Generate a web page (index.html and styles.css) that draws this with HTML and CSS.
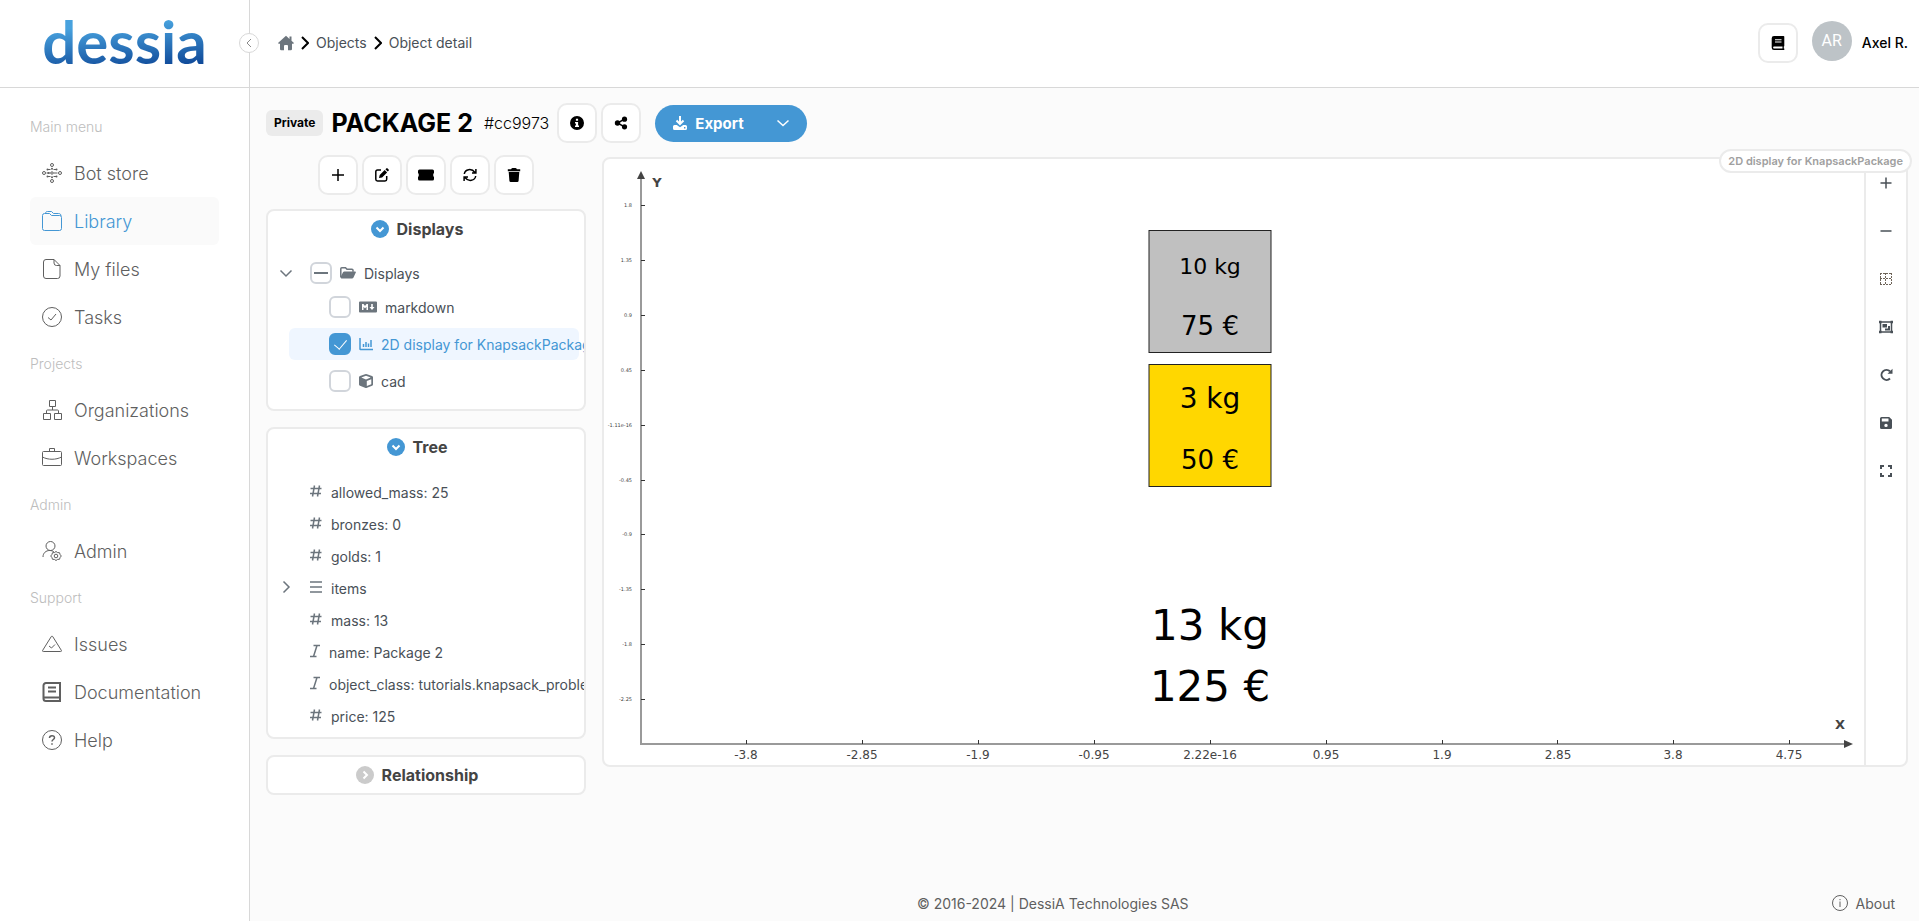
FILE: index.html
```html
<!DOCTYPE html>
<html lang="en">
<head>
<meta charset="utf-8">
<meta name="viewport" content="width=device-width, initial-scale=1">
<title>Object detail</title>
<link rel="stylesheet" href="styles.css">
</head>
<body>
<div class="app">
  <aside class="sidebar">
    <div class="brand"><a class="logo" href="#">dessia</a></div>
    <button class="collapse" type="button" aria-label="Collapse menu">
      <svg class="i10" viewBox="0 0 10 10"><path class="ln" d="M7 1 3 5l4 4"/></svg>
    </button>
    <nav class="menu">
      <h2 class="menu-label">Main menu</h2>
      <a class="menu-item" href="#"><svg class="i20 thin bots" viewBox="0 0 20 20"><circle cx="10" cy="2" r="1.500"/><circle cx="10" cy="18" r="1.500"/><circle cx="2" cy="10" r="1.500"/><circle cx="18" cy="10" r="1.500"/><circle cx="10" cy="10" r="1.200"/><path d="M5.500 6.500h3M11.500 6.500h3M5.500 13.500h3M11.500 13.500h3M4.500 10h4M11.500 10h4"/><g class="dots"><circle cx="5.500" cy="6.500" r="1"/><circle cx="14.500" cy="6.500" r="1"/><circle cx="5.500" cy="13.500" r="1"/><circle cx="14.500" cy="13.500" r="1"/><circle cx="10" cy="5.800" r="1"/><circle cx="10" cy="14.200" r="1"/><circle cx="6.500" cy="10" r="1"/></g></svg>Bot store</a>
      <a class="menu-item active" href="#"><svg class="i20 thin" viewBox="0 0 20 20"><path d="M.5 4.500a2 2 0 0 1 2-2h5l2 2h8a2 2 0 0 1 2 2v11a2 2 0 0 1-2 2h-15a2 2 0 0 1-2-2zM3.500 2.500c0-1.300.7-2 2-2h4l2 2h5c1.600 0 2.500.9 2.500 2.500"/></svg>Library</a>
      <a class="menu-item" href="#"><svg class="i20 thin" viewBox="0 0 20 20"><path d="M12 .5H4a2.500 2.500 0 0 0-2.500 2.500v14A2.500 2.500 0 0 0 4 19.500h11.500A2.500 2.500 0 0 0 18 17V6.500zM12 .5V4a2.500 2.500 0 0 0 2.500 2.500H18"/></svg>My files</a>
      <a class="menu-item" href="#"><svg class="i20 thin" viewBox="0 0 20 20"><circle cx="10" cy="10" r="9.500"/><path d="m6 10.500 3 2.500 5-6"/></svg>Tasks</a>
      <h2 class="menu-label">Projects</h2>
      <a class="menu-item" href="#"><svg class="i20 thin" viewBox="0 0 20 20"><path d="M7.500.5h6v6h-6zM1.500 13.500h7v6h-7zM12.500 13.500h7v6h-7zM10.500 6.500V10M4.500 13.500V11q0-1 1-1h10q1 0 1 1v2.500"/></svg>Organizations</a>
      <a class="menu-item" href="#"><svg class="i20 thin" viewBox="0 0 20 20"><rect x=".5" y="3.500" width="19" height="14" rx="1"/><path d="M7.500 3.500v-3h5v3M.5 9c5.500 3 13.500 3 19 0"/></svg>Workspaces</a>
      <h2 class="menu-label">Admin</h2>
      <a class="menu-item" href="#"><svg class="i20 thin" viewBox="0 0 20 20"><circle cx="8.500" cy="5" r="4.500"/><path d="M1 16c0-4 3-6.500 6.500-6.500 2 0 3.500.5 4.500 1.500"/><circle cx="14" cy="15" r="1.800"/><path d="m14 10.500 1.600 1.100 1.900.1.600 1.800 1.200 1.500-1.200 1.500-.6 1.800-1.900.1-1.600 1.100-1.600-1.100-1.900-.1-.6-1.800L8.700 15l1.200-1.500.6-1.800 1.900-.1z"/></svg>Admin</a>
      <h2 class="menu-label">Support</h2>
      <a class="menu-item" href="#"><svg class="i20 thin" viewBox="0 0 20 20"><path d="M9.300 2.500.7 16.300q-.6 1.200.6 1.200h17.400q1.200 0 .6-1.200L10.700 2.500q-.7-1-1.400 0zM7 12l2.500 2 3.500-3.500"/></svg>Issues</a>
      <a class="menu-item" href="#"><svg class="i20 thick" viewBox="0 0 20 20"><path d="M18 1H4a2.500 2.500 0 0 0-2.500 2.500v13A2.500 2.500 0 0 0 4 19h14zM2 15.500h16M6 5.500h8M6 9.500h8"/></svg>Documentation</a>
      <a class="menu-item" href="#"><svg class="i20 thin" viewBox="0 0 20 20"><circle cx="10" cy="10" r="9.500"/><path class="w15" d="M7.500 8c0-3 5-3 5-.3 0 1.800-2.500 1.800-2.500 3.800M10 13.300v1.500"/></svg>Help</a>
    </nav>
  </aside>

  <div class="page">
    <header class="topbar">
      <nav class="crumbs" aria-label="Breadcrumb">
        <a href="#" aria-label="Home"><svg class="home" viewBox="0 0 16 16"><path d="M8 .8 0 8l1 1 1-.6V14q0 1.200 1.200 1.200H6V11q0-1 1-1h2q1 0 1 1v4.200h2.800Q14 15.200 14 14V8.400l1 .6 1-1-2.500-2.300V1.600h-2v2.300z"/></svg></a>
        <svg class="sep" viewBox="0 0 8 14"><path class="ln" d="m1 1 6 6-6 6"/></svg>
        <a href="#">Objects</a>
        <svg class="sep" viewBox="0 0 8 14"><path class="ln" d="m1 1 6 6-6 6"/></svg>
        <a href="#">Object detail</a>
      </nav>
      <div class="user">
        <button class="square" type="button" aria-label="Documentation"><svg class="i14" viewBox="0 0 14 14"><path fill-rule="evenodd" d="M3 0h9.500q.8 0 .8.800v8.900q0 .6-.5.800v2h.5V14H3Q.7 14 .7 11.700V2.300Q.7 0 3 0zm1 3.200v1h6.500v-1zm0 2.200v1h6.500v-1zM3 10.600q-.9 0-.9.900t.9.900h8.500v-1.800z"/></svg></button>
        <span class="avatar">AR</span>
        <span class="user-name">Axel R.</span>
      </div>
    </header>

    <main class="content">
      <div class="title-row">
        <span class="badge">Private</span>
        <h1 class="title">PACKAGE 2</h1>
        <span class="object-id">#cc9973</span>
        <div class="button-group">
          <button class="square" type="button" aria-label="Information"><svg class="i14" viewBox="0 0 14 14"><path fill-rule="evenodd" d="M7 0a7 7 0 1 1 0 14A7 7 0 0 1 7 0zM5.900 2.800v2h2.200v-2zM5 6v1.500h.9v2H5V11h4V9.500h-.9V6z"/></svg></button>
          <button class="square" type="button" aria-label="Share"><svg class="i14" viewBox="0 0 14 14"><circle cx="3.500" cy="7" r="2.700"/><circle cx="10.500" cy="3.200" r="2.600"/><circle cx="10.500" cy="10.800" r="2.600"/><path class="ln" d="m10.500 3.200-7 3.800 7 3.800"/></svg></button>
        </div>
        <div class="export">
          <button class="export-main" type="button"><svg class="i14" viewBox="0 0 14 14"><path class="ln heavy" d="M7 0v7.500M3.500 4.500 7 8l3.500-3.500"/><path fill-rule="evenodd" d="M1.500 9h2.300L7 11.200 10.200 9h2.300Q14 9 14 10.500v2q0 1.500-1.500 1.500h-11Q0 14 0 12.500v-2Q0 9 1.500 9zM11 11v1.400h1.400V11z"/></svg>Export</button>
          <button class="export-more" type="button" aria-label="Export options"><svg class="i14" viewBox="0 0 14 14"><path class="ln" d="m1.500 4.500 5.500 5 5.500-5"/></svg></button>
        </div>
      </div>

      <div class="columns">
        <div class="side">
          <div class="button-group centered">
            <button class="square" type="button" aria-label="Add"><svg class="i14" viewBox="0 0 14 14"><path class="ln" d="M7 1v12M1 7h12"/></svg></button>
            <button class="square" type="button" aria-label="Edit"><svg class="i14" viewBox="0 0 14 14"><path class="ln" d="M6 2H2.500Q.8 2 .8 3.700v7.600Q.8 13 2.500 13H10q1.700 0 1.700-1.700V8"/><path d="m4 10 .7-3 5-5 2.400 2.400-5 5zM10.400 1.300l.9-.9q.7-.6 1.300 0l1 1q.6.600 0 1.300l-.9.900z"/></svg></button>
            <button class="square" type="button" aria-label="Ticket"><svg class="i16" viewBox="0 0 16 14"><path d="M1.500 1.500h13Q16 1.500 16 3v2q-.8.400-.8 2T16 9v2q0 1.500-1.500 1.500h-13Q0 12.500 0 11V9q.8-.4.800-2T0 5V3q0-1.500 1.500-1.500z"/></svg></button>
            <button class="square" type="button" aria-label="Refresh"><svg class="i14" viewBox="0 0 14 14"><path class="ln" d="M1.300 6C2 1.300 8.500-.2 12 4.500M12.700 8C12 12.700 5.500 14.200 2 9.500M12.900 1v4H9M1.100 13V9H5"/></svg></button>
            <button class="square" type="button" aria-label="Delete"><svg class="i14" viewBox="0 0 14 14"><path d="M4.500.6Q4.800 0 5.500 0h3q.7 0 1 .6l.4.600h3.300v2H.8v-2h3.300zM1.700 4h10.600l-.7 8.700q-.1 1.300-1.300 1.300H3.700q-1.200 0-1.300-1.300z"/></svg></button>
          </div>

          <section class="card">
            <h2 class="card-head"><button type="button"><svg class="toggle" viewBox="0 0 18 18"><circle cx="9" cy="9" r="9"/><path class="ln" d="m5.500 7.500 3.500 3.500 3.500-3.500"/></svg>Displays</button></h2>
            <ul class="tree displays">
              <li class="row root">
                <button class="expander" type="button" aria-label="Collapse Displays"><svg class="i14" viewBox="0 0 14 14"><path class="ln" d="M1.500 4.500 7 10l5.500-5.500"/></svg></button>
                <input class="check partial" type="checkbox" id="d0">
                <label for="d0"><svg class="i16" viewBox="0 0 16 14"><path d="M.3 11.500 3 6.200q.4-.8 1.300-.8H15q1.300 0 .8 1l-2.300 5q-.5 1-1.500 1H1.300z"/><path class="ln" d="M.8 11V2.700q0-1 1-1h3.700l1.500 1.600h5q1 0 1 1v1.500"/></svg>Displays</label>
              </li>
              <li class="row child">
                <input class="check" type="checkbox" id="d1">
                <label for="d1"><svg class="i18" viewBox="0 0 18 14"><path fill-rule="evenodd" d="M1 1.500h16q1 0 1 1v9q0 1-1 1H1q-1 0-1-1v-9q0-1 1-1zM3 4v6h1.500V6.700L6 8.500l1.500-1.800V10H9V4H7.500L6 6 4.500 4zm9.200 0v3h-1.700l2.500 3 2.500-3h-1.700V4z"/></svg>markdown</label>
              </li>
              <li class="row child selected">
                <input class="check" type="checkbox" id="d2" checked>
                <label for="d2"><svg class="i14" viewBox="0 0 14 14"><path class="ln" d="M1 1v11q0 .5.5.5H14M4.500 7v3M7 5v5M9.500 6.500V10M12 3v7"/></svg>2D display for KnapsackPackage</label>
              </li>
              <li class="row child">
                <input class="check" type="checkbox" id="d3">
                <label for="d3"><svg class="i14" viewBox="0 0 14 14"><path fill-rule="evenodd" d="M7 0q.5 0 1 .2l5 1.900q1 .5 1 1.400v7q0 .8-.9 1.300L8 13.800q-.5.200-1 .2t-1-.2l-5-2q-1-.5-1-1.300v-7q0-.9 1-1.400L6 .2Q6.500 0 7 0zm0 1.800L2.300 3.600 7 5.400l4.700-1.800zM7.800 12l4.500-1.800V5.200L7.800 7z"/></svg>cad</label>
              </li>
            </ul>
          </section>

          <section class="card">
            <h2 class="card-head"><button type="button"><svg class="toggle" viewBox="0 0 18 18"><circle cx="9" cy="9" r="9"/><path class="ln" d="m5.500 7.500 3.500 3.500 3.500-3.500"/></svg>Tree</button></h2>
            <ul class="tree attributes">
              <li class="row"><svg class="i12" viewBox="0 0 12 14"><path class="ln" d="M4.500 1.500 2.500 12.500M9.500 1.500l-2 11M.5 4.500h11M0 9.500h11"/></svg>allowed_mass: 25</li>
              <li class="row"><svg class="i12" viewBox="0 0 12 14"><path class="ln" d="M4.500 1.500 2.500 12.500M9.500 1.500l-2 11M.5 4.500h11M0 9.500h11"/></svg>bronzes: 0</li>
              <li class="row"><svg class="i12" viewBox="0 0 12 14"><path class="ln" d="M4.500 1.500 2.500 12.500M9.500 1.500l-2 11M.5 4.500h11M0 9.500h11"/></svg>golds: 1</li>
              <li class="row expandable"><button class="expander" type="button" aria-label="Expand items"><svg class="i14" viewBox="0 0 14 14"><path class="ln" d="M4.500 1.500 10 7l-5.500 5.500"/></svg></button><svg class="i12" viewBox="0 0 12 14"><path class="ln" d="M0 2h12M0 7h12M0 12h12"/></svg>items</li>
              <li class="row"><svg class="i12" viewBox="0 0 12 14"><path class="ln" d="M4.500 1.500 2.500 12.500M9.500 1.500l-2 11M.5 4.500h11M0 9.500h11"/></svg>mass: 13</li>
              <li class="row"><svg class="i10" viewBox="0 0 10 14"><path class="ln" d="M3.500 1.500H10M0 12.500h6.500M7 1.500l-3.500 11"/></svg>name: Package 2</li>
              <li class="row"><svg class="i10" viewBox="0 0 10 14"><path class="ln" d="M3.500 1.500H10M0 12.500h6.500M7 1.500l-3.500 11"/></svg>object_class: tutorials.knapsack_problem</li>
              <li class="row"><svg class="i12" viewBox="0 0 12 14"><path class="ln" d="M4.500 1.500 2.500 12.500M9.500 1.500l-2 11M.5 4.500h11M0 9.500h11"/></svg>price: 125</li>
            </ul>
          </section>

          <section class="card">
            <h2 class="card-head"><button type="button"><svg class="toggle closed" viewBox="0 0 18 18"><circle cx="9" cy="9" r="9"/><path class="ln" d="m7.500 5.500 3.500 3.500-3.500 3.500"/></svg>Relationship</button></h2>
          </section>
        </div>

        <section class="viewer">
          <span class="viewer-tag">2D display for KnapsackPackage</span>
          <svg class="plot" viewBox="0 0 1260 606" role="img" aria-label="2D display for KnapsackPackage">
            <path class="axis" d="M37 15v570h1206"/>
            <path class="arrow" d="M37 12l4 8h-8zM1249 585l-9 4v-8z"/>
            <path class="ticks" d="M37 46.500h4M37 101.500h4M37 156.500h4M37 211.500h4M37 266.500h4M37 321.500h4M37 375.500h4M37 430.500h4M37 485.500h4M37 540.500h4M142.500 585v-4M258.500 585v-4M374.500 585v-4M490.500 585v-4M606.500 585v-4M722.500 585v-4M838.500 585v-4M953.500 585v-4M1069.500 585v-4M1185.500 585v-4"/>
            <g class="y-labels">
              <text x="28" y="48">1.8</text><text x="28" y="103">1.35</text><text x="28" y="158">0.9</text><text x="28" y="213">0.45</text><text x="28" y="268">-1.11e-16</text><text x="28" y="323">-0.45</text><text x="28" y="377">-0.9</text><text x="28" y="432">-1.35</text><text x="28" y="487">-1.8</text><text x="28" y="542">-2.25</text>
            </g>
            <g class="x-labels">
              <text x="142" y="600">-3.8</text><text x="258" y="600">-2.85</text><text x="374" y="600">-1.9</text><text x="490" y="600">-0.95</text><text x="606" y="600">2.22e-16</text><text x="722" y="600">0.95</text><text x="838" y="600">1.9</text><text x="954" y="600">2.85</text><text x="1069" y="600">3.8</text><text x="1185" y="600">4.75</text>
            </g>
            <g class="axis-names"><text x="53" y="28">Y</text><text x="1236" y="570">X</text></g>
            <rect class="silver" x="545" y="71.500" width="122" height="122"/>
            <rect class="gold" x="545" y="205.500" width="122" height="122"/>
            <g class="shape-text">
              <text class="s22" x="606" y="115">10 kg</text>
              <text class="s26" x="606" y="176">75 €</text>
              <text class="s28" x="606" y="249">3 kg</text>
              <text class="s26" x="606" y="310">50 €</text>
              <text class="s42" x="606" y="481">13 kg</text>
              <text class="s42" x="606" y="542">125 €</text>
            </g>
          </svg>
          <div class="tools">
            <button type="button" aria-label="Zoom in"><svg class="i12" viewBox="0 0 12 12"><path class="ln" d="M6 .5v11M.5 6h11"/></svg></button>
            <button type="button" aria-label="Zoom out"><svg class="i12" viewBox="0 0 12 12"><path class="ln" d="M.5 6h11"/></svg></button>
            <button type="button" aria-label="Grid"><svg class="i12 grid" viewBox="0 0 12 12"><path d="M0 .5h12M0 5.500h12M0 11.500h12M.5 0v12M5.500 0v12M11.500 0v12"/></svg></button>
            <button type="button" aria-label="Zoom window"><svg class="i14" viewBox="0 0 14 14"><path class="ln" d="M1.500 2h11v10h-11z"/><path d="M3.500 4H8v3.500H3.500zM9 6h2v4.500H6V8.500h3zM0 .7h2.500v2.500H0zM11.500.7H14v2.500h-2.500zM0 10.800h2.500v2.500H0zM11.500 10.800H14v2.500h-2.500z"/></svg></button>
            <button type="button" aria-label="Reset view"><svg class="i14" viewBox="0 0 14 14"><path class="ln heavy" d="M11 10.500a5 5 0 1 1 0-7.200"/><path d="M13.500.8v5h-5z"/></svg></button>
            <button type="button" aria-label="Save"><svg class="i12" viewBox="0 0 12 12"><path fill-rule="evenodd" d="M1.500 0h7.700L12 2.800v7.700q0 1.500-1.500 1.500h-9Q0 12 0 10.500v-9Q0 0 1.500 0zm.3 1.600v3H8.500v-3zM6 6.700a1.700 1.700 0 1 0 0 3.400 1.700 1.700 0 0 0 0-3.400z"/></svg></button>
            <button type="button" aria-label="Full screen"><svg class="i12" viewBox="0 0 12 12"><path class="ln heavy" d="M1 4V1h3M8 1h3v3M11 8v3H8M4 11H1V8"/></svg></button>
          </div>
        </section>
      </div>
    </main>

    <footer class="footer">
      <span class="copyright">© 2016-2024 | DessiA Technologies SAS</span>
      <a class="about" href="#"><svg class="i16" viewBox="0 0 16 16"><circle class="ln" cx="8" cy="8" r="7.500"/><path class="ln" d="M8 6.500V12M8 4v1.200"/></svg>About</a>
    </footer>
  </div>
</div>
</body>
</html>
```
FILE: styles.css
```css
* { box-sizing: border-box; }
body {
  margin: 0;
  font-family: Inter, "Noto Sans", sans-serif;
  font-size: 14px;
  color: #495057;
  background: #fbfbfb;
}
h1, h2, ul { margin: 0; padding: 0; list-style: none; }
a { color: inherit; text-decoration: none; }
button { font: inherit; color: inherit; padding: 0; border: 0; background: none; cursor: pointer; }
svg { display: block; flex: none; fill: currentColor; }
.ln { fill: none; stroke: currentColor; stroke-width: 1.5; }
.heavy { stroke-width: 2; }
.i10 { width: 10px; height: 14px; }
.i12 { width: 12px; height: 14px; }
.i14 { width: 14px; height: 14px; }
.i16 { width: 16px; height: 16px; }
.i18 { width: 18px; height: 14px; }
.i20 { width: 20px; height: 20px; }
.thin, .thick { fill: none; stroke: currentColor; stroke-width: 1; }
.thick { stroke-width: 2; }
.w15 { stroke-width: 1.5; }
.dots { fill: currentColor; stroke: none; }

.app { display: flex; min-height: 100vh; }

/* Sidebar */
.sidebar {
  position: relative;
  flex: none;
  width: 250px;
  background: #fff;
  border-right: 1px solid #d8d8d8;
}
.brand {
  display: flex;
  align-items: center;
  justify-content: center;
  height: 88px;
  border-bottom: 1px solid #d8d8d8;
}
.logo {
  padding-bottom: 6px;
  font-family: Lato, sans-serif;
  font-size: 60px;
  font-weight: 700;
  line-height: 72px;
  color: transparent;
  background: linear-gradient(175deg, #48a2de 28%, #0b4394 82%);
  background-clip: text;
  -webkit-background-clip: text;
}
.collapse {
  position: absolute;
  top: 33px;
  right: -10px;
  display: flex;
  align-items: center;
  justify-content: center;
  width: 20px;
  height: 20px;
  border: 1px solid #d8d8d8;
  border-radius: 50%;
  background: #fff;
  color: #8a8a8a;
}
.collapse .ln { stroke-width: 1; }
.menu { padding: 16px 30px; }
.menu-label {
  font-size: 14px;
  font-weight: 300;
  line-height: 45px;
  color: #bdbdbd;
}
.menu-item {
  display: flex;
  align-items: center;
  gap: 12px;
  height: 48px;
  padding: 0 12px;
  border-radius: 6px;
  font-size: 18px;
  font-weight: 300;
  color: #5f5f5f;
}
.menu-item.active { background: #fafafa; color: #4497d4; }

/* Top bar */
.page { flex: 1; min-width: 0; display: flex; flex-direction: column; }
.topbar {
  display: flex;
  align-items: center;
  justify-content: space-between;
  height: 88px;
  padding: 0 11px 2px 28px;
  background: #fff;
  border-bottom: 1px solid #d8d8d8;
}
.crumbs { display: flex; align-items: center; gap: 7px; }
.home { width: 16px; height: 16px; color: #6c757d; }
.sep { width: 8px; height: 14px; color: #000; }
.sep .ln { stroke-width: 2; }
.user { display: flex; align-items: center; color: #000; }
.avatar {
  display: flex;
  align-items: center;
  justify-content: center;
  width: 40px;
  height: 40px;
  margin: 0 10px 4px 14px;
  border-radius: 50%;
  background: #bdc3c7;
  color: #fff;
  font-family: Roboto, sans-serif;
  font-size: 16px;
}
.user-name { font-weight: 500; font-size: 14px; }
.square {
  display: flex;
  align-items: center;
  justify-content: center;
  width: 40px;
  height: 40px;
  border: 2px solid #ebebeb;
  border-radius: 10px;
  background: #fff;
  color: #000;
}

/* Title row */
.content { padding: 15px 11px 0 16px; }
.title-row { display: flex; align-items: center; height: 40px; color: #000; }
.badge {
  padding: 0 8px;
  border-radius: 6px;
  background: #ebebeb;
  font-size: 12px;
  font-weight: 700;
  line-height: 26px;
}
.title { margin: 0 11px 0 8px; font-size: 25px; font-weight: 700; }
.object-id { font-size: 16px; font-weight: 300; }
.button-group { display: flex; gap: 4px; margin-left: 8px; }
.button-group.centered { justify-content: center; margin: 0 0 14px; }
.export {
  display: flex;
  align-items: center;
  justify-content: space-between;
  width: 152px;
  height: 37px;
  margin-left: 14px;
  padding: 0 17px 0 18px;
  border-radius: 19px;
  background: #4497d4;
  color: #fff;
}
.export-main { display: flex; align-items: center; gap: 8px; font-size: 15px; font-weight: 700; }

/* Columns */
.columns {
  display: grid;
  grid-template-columns: 320px minmax(0, 1fr);
  align-items: start;
  gap: 16px;
  padding-top: 12px;
}
.card {
  overflow: hidden;
  margin-bottom: 16px;
  border: 2px solid #ebebeb;
  border-radius: 8px;
  background: #fff;
}
.card-head { padding-right: 18px; color: #444; font-size: 16px; font-weight: 700; }
.card-head button { display: flex; align-items: center; gap: 8px; height: 36px; margin: 0 auto; }
.toggle { width: 18px; height: 18px; fill: #4497d4; color: #fff; }
.toggle .ln { stroke-width: 2; }
.toggle.closed { fill: #cbcbcb; }
.tree { white-space: nowrap; }
.row { display: flex; align-items: center; height: 32px; color: #495057; }
.row svg { color: #6c757d; }
.expander { display: flex; align-items: center; justify-content: center; width: 18px; height: 32px; }
.displays { padding: 10px 0 7px; }
.displays .row { margin: 0 5px 5px 21px; border-radius: 6px; }
.displays .row.root { margin: 0 5px 2px 9px; }
.displays .root .expander { margin-right: 15px; }
.displays .row.child { padding-left: 40px; }
.displays label { display: flex; align-items: center; gap: 8px; margin-left: 8px; }
.row.selected, .row.selected svg { color: #4497d4; }
.row.selected { background: #eff6ff; }
.check {
  appearance: none;
  flex: none;
  display: flex;
  align-items: center;
  justify-content: center;
  width: 22px;
  height: 22px;
  margin: 0;
  border: 2px solid #d1d5db;
  border-radius: 6px;
  background: #fff;
}
.check.partial::before { content: ""; width: 14px; height: 2px; background: #6c757d; }
.check:checked { border-color: #4497d4; background: #4497d4; }
.check:checked::before {
  content: "";
  width: 6px;
  height: 11px;
  margin-bottom: 3px;
  border: solid #fff;
  border-width: 0 1px 1px 0;
  transform: rotate(40deg);
}
.attributes { padding: 11px 0 5px; }
.attributes .row { gap: 9px; padding-left: 42px; }
.attributes .row.expandable { padding-left: 9px; }
.attributes .expander { margin-right: 6px; }
.attributes .row svg { margin-bottom: 2px; }

/* Plot viewer */
.viewer {
  position: relative;
  display: flex;
  margin-top: 2px;
  border: 2px solid #ebebeb;
  border-radius: 8px;
  background: #fff;
}
.viewer-tag {
  position: absolute;
  top: -10px;
  right: -6px;
  padding: 0 7px;
  border: 2px solid #ebebeb;
  border-radius: 12px;
  background: #fff;
  color: #a0a0a0;
  font-size: 11px;
  font-weight: 600;
  line-height: 20px;
}
.plot { flex: 1; min-width: 0; height: auto; font-family: "DejaVu Sans", sans-serif; fill: #444; }
.axis { fill: none; stroke: #9a9a9a; stroke-width: 2; }
.ticks { fill: none; stroke: #333; stroke-width: 1; }
.y-labels { font-size: 5px; text-anchor: end; }
.x-labels { font-size: 12px; text-anchor: middle; }
.axis-names { font-size: 13px; font-weight: 700; text-anchor: middle; }
.silver { fill: #c0c0c0; stroke: #222; }
.gold { fill: #ffd700; stroke: #222; }
.shape-text { fill: #000; text-anchor: middle; }
.s22 { font-size: 22px; }
.s26 { font-size: 26px; }
.s28 { font-size: 28px; }
.s42 { font-size: 42px; }
.tools { flex: none; width: 42px; border-left: 2px solid #ebebeb; }
.tools button { display: flex; align-items: center; justify-content: center; width: 100%; height: 48px; }
.grid { fill: none; stroke: #6e6459; stroke-dasharray: 2 1; }

/* Footer */
.footer {
  display: flex;
  align-items: center;
  height: 34px;
  margin-top: auto;
  padding: 0 24px 2px;
  color: #5f5f5f;
}
.copyright { flex: 1; text-align: center; }
.about { display: flex; align-items: center; gap: 8px; }
.about .ln { stroke-width: 1; }
```
